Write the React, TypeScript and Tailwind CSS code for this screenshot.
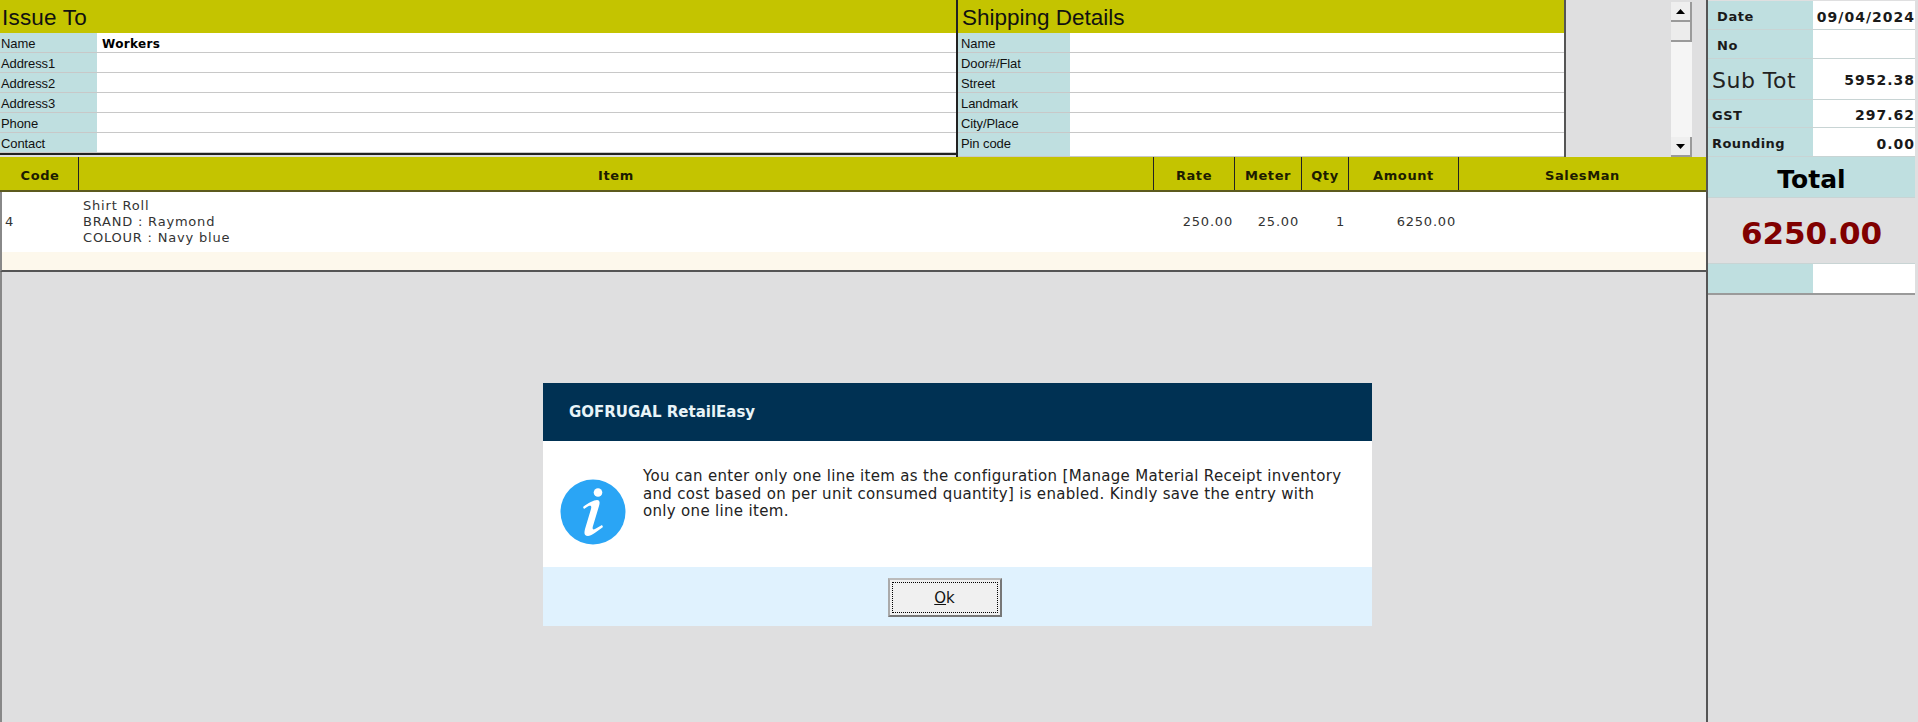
const dejavu = "font-['DejaVu_Sans',sans-serif]"
const arial = "font-['Liberation_Sans',Arial,sans-serif]"

const issueRows = [
  { label: "Name", value: "Workers" },
  { label: "Address1" },
  { label: "Address2" },
  { label: "Address3" },
  { label: "Phone" },
  { label: "Contact" },
]

const shipRows = ["Name", "Door#/Flat", "Street", "Landmark", "City/Place", "Pin code"]

const columns = [
  { name: "Code", w: "w-[77px]" },
  { name: "Item", w: "w-[1075px]" },
  { name: "Rate", w: "w-[81px]" },
  { name: "Meter", w: "w-[67px]" },
  { name: "Qty", w: "w-[47px]" },
  { name: "Amount", w: "w-[110px]" },
  { name: "SalesMan", w: "flex-1" },
]

function FormRow({ label, value, labelW, tall }: { label: string; value?: string; labelW: string; tall?: boolean }) {
  return (
    <div className={`flex ${tall ? "h-6" : "h-5"} border-b border-[#c8c8c8]`}>
      <div className={`${labelW} shrink-0 bg-[#bfdfe0] pt-[1px] text-[13px] leading-[19px] tracking-[-0.1px] text-[#111] ${arial}`}>
        {label}
      </div>
      <div className={`flex-1 bg-white pl-[5px] pt-[2px] text-[12px] font-bold leading-[19px] tracking-[0.35px] text-black ${dejavu}`}>{value}</div>
    </div>
  )
}

function SummaryRow({ label, value, h, labelClass, pad = "pt-[4px]" }: { label: string; value?: string; h: string; labelClass: string; pad?: string }) {
  return (
    <div className={`flex ${h} border-b border-[#c8d4d4]`}>
      <div className={`flex w-[105px] shrink-0 items-center bg-[#bfdfe0] ${pad} ${dejavu} ${labelClass}`}>{label}</div>
      <div className={`flex flex-1 items-center justify-end bg-white ${pad} text-[14px] font-bold tracking-[1px] text-[#1a1a1a] ${dejavu}`}>{value}</div>
    </div>
  )
}

function ScrollArrow({ up }: { up?: boolean }) {
  return (
    <div className="flex h-5 items-center justify-center border-r-2 border-b-2 border-[#9a9a9a] bg-[#efefef]">
      <svg width="9" height="5" viewBox="0 0 9 5">
        <path d={up ? "M4.5 0L9 5H0z" : "M0 0h9L4.5 5z"} fill="#000" />
      </svg>
    </div>
  )
}

export default function App() {
  return (
    <div className="relative flex h-[722px] w-[1918px] overflow-hidden bg-[#dfdfe0]">
      {/* left side */}
      <div className="flex w-[1708px] shrink-0 flex-col border-r-2 border-[#555]">
        <div className="flex h-[157px] shrink-0">
          <div className="flex w-[958px] shrink-0 flex-col border-r-2 border-[#222]">
            <div className={`h-[33px] bg-[#c4c400] pl-[2px] text-[22.5px] leading-[35px] tracking-[0.2px] text-[#111] ${arial}`}>Issue To</div>
            {issueRows.map(r => (
              <FormRow key={r.label} label={r.label} value={r.value} labelW="w-[97px] pl-[1px]" />
            ))}
            <div className="h-[4px] border-t-2 border-[#222] bg-[#dfdfe0]" />
          </div>
          <div className="flex w-[608px] shrink-0 flex-col border-r-2 border-[#555]">
            <div className={`h-[33px] bg-[#c4c400] pl-[4px] text-[22.5px] leading-[35px] text-[#111] ${arial}`}>Shipping Details</div>
            {shipRows.map((s, i) => (
              <FormRow key={s} label={s} labelW="w-[112px] pl-[3px]" tall={i === shipRows.length - 1} />
            ))}
          </div>
          <div className="flex flex-1 justify-end pr-[14px] pt-[2px]">
            <div className="flex h-[155px] w-[21px] flex-col bg-[#f5f5f5]">
              <ScrollArrow up />
              <div className="h-[20px] border-r-2 border-b-2 border-[#9a9a9a] bg-[#ececec]" />
              <div className="flex-1" />
              <ScrollArrow />
            </div>
          </div>
        </div>

        <div className={`flex h-[35px] shrink-0 border-b-2 border-[#5c5a1e] bg-[#c4c400] pl-[2px] text-[13px] font-bold tracking-[0.6px] text-[#1c1c00] ${dejavu}`}>
          {columns.map((c, i) => (
            <div key={c.name} className={`${c.w} flex items-center justify-center pt-[4px] ${i < columns.length - 1 ? "border-r border-[#222]" : ""}`}>
              {c.name}
            </div>
          ))}
        </div>

        <div className={`flex h-[60px] shrink-0 border-l-2 border-[#888] bg-white text-[13px] leading-[16px] tracking-[0.8px] text-[#333] ${dejavu}`}>
          <div className="flex w-[77px] items-center pl-[3px]">4</div>
          <div className="flex w-[1075px] flex-col justify-center pl-[4px]">
            <span>Shirt Roll</span>
            <span>BRAND : Raymond</span>
            <span>COLOUR : Navy blue</span>
          </div>
          <div className="flex w-[81px] items-center justify-end pr-[2px]">250.00</div>
          <div className="flex w-[67px] items-center justify-end pr-[3px]">25.00</div>
          <div className="flex w-[47px] items-center justify-end pr-[4px]">1</div>
          <div className="flex w-[110px] items-center justify-end pr-[3px]">6250.00</div>
        </div>
        <div className="h-[20px] shrink-0 border-b-2 border-l-2 border-[#555] border-l-[#888] bg-[#fdf8ec]" />
        <div className="flex-1 border-l-2 border-[#888]" />
      </div>

      {/* right side */}
      <div className="flex flex-1 flex-col pt-[1px] pr-[3px]">
        <SummaryRow label="Date" value="09/04/2024" h="h-[29px]" labelClass="pl-[9px] text-[13px] font-bold tracking-[0.6px] text-[#1a1a1a]" />
        <SummaryRow label="No" h="h-[29px]" labelClass="pl-[9px] text-[13px] font-bold tracking-[0.6px] text-[#1a1a1a]" />
        <SummaryRow label="Sub Tot" value="5952.38" h="h-[41px]" pad="pt-[2px]" labelClass="pl-[4px] text-[22px] tracking-[0.5px] text-[#222]" />
        <SummaryRow label="GST" value="297.62" h="h-[28px]" labelClass="pl-[4px] text-[13px] font-bold tracking-[0.5px] text-[#1a1a1a]" />
        <SummaryRow label="Rounding" value="0.00" h="h-[29px]" labelClass="pl-[4px] text-[13px] font-bold tracking-[0.4px] text-[#1a1a1a]" />
        <div className={`flex h-[41px] items-center justify-center border-b border-[#c8d4d4] bg-[#bfdfe0] pt-[5px] text-[25px] font-bold text-black ${dejavu}`}>Total</div>
        <div className={`flex h-[66px] items-center justify-center border-b border-[#c8d4d4] bg-[#dfdfe0] pt-[5px] text-[31px] font-bold text-[#800000] ${dejavu}`}>6250.00</div>
        <div className="flex h-[31px] border-b-2 border-[#9a9a9a]">
          <div className="w-[105px] bg-[#bfdfe0]" />
          <div className="flex-1 bg-white" />
        </div>
      </div>

      {/* message box */}
      <div className={`absolute top-[383px] left-[543px] flex h-[243px] w-[829px] flex-col ${dejavu}`}>
        <div className="flex h-[58px] items-center bg-[#003153] pl-[26px] text-[15px] font-bold text-[#e8f4f8]">GOFRUGAL RetailEasy</div>
        <div className="flex h-[126px] bg-white">
          <svg className="mt-[38px] ml-[17px] shrink-0" width="66" height="66" viewBox="0 0 66 66">
            <circle cx="33" cy="33" r="32.5" fill="#2aa5f5" />
            <circle cx="38" cy="13.500" r="4.300" fill="#fff" />
            <path d="M23 28C28 24 34 21 37 21C40 21 40 24 39 27L33 47C32 50 33 51 35 50L42 46L43 48C38 52 31 57 28 57C24 57 24 54 25 50L31 30C32 26 30 26 27 28L24 30z" fill="#fff" />
          </svg>
          <p className="mt-[27px] ml-[17px] w-[705px] text-[15px] leading-[17.500px] tracking-[0.32px] text-[#222]">
            You can enter only one line item as the configuration [Manage Material Receipt inventory
            and cost based on per unit consumed quantity] is enabled. Kindly save the entry with
            only one line item.
          </p>
        </div>
        <div className="flex flex-1 items-center justify-center bg-[#e0f2fe] pr-[26px] pt-[2px]">
          <button className="flex h-[39px] w-[114px] items-center justify-center border-2 border-[#777] border-t-[#bbb] border-l-[#aaa] bg-[#f0f0f0] p-[2px] text-[15px] text-[#111]">
            <span className="flex h-full w-full items-center justify-center border border-dotted border-black pt-[2px]">
              <span className="underline">O</span>k
            </span>
          </button>
        </div>
      </div>
    </div>
  )
}
